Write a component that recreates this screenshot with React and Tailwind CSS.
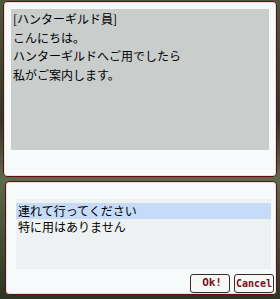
export default function App() {
  const jp = { fontFamily: '"Noto Sans CJK JP", "Noto Sans", sans-serif' };
  const mono = { fontFamily: '"DejaVu Sans Mono", monospace' };
  return (
    <div className="w-[280px] h-[299px] overflow-hidden bg-[linear-gradient(180deg,#4a5a3a_0%,#2e3a24_40%,#5b6a48_60%,#2a3522_100%)] flex flex-col" style={jp}>
      <div className="ml-[3px] mt-[1px] w-[274px] h-[176px] rounded-[4px] border border-[#5a0f18] bg-[#f6fafa] shadow-[inset_0_0_0_1px_#f3dcdc] pt-[7px] pl-[7px]">
        <div className="w-[258px] h-[141px] bg-[#c9cdcc] pl-[2px] pt-[1px] text-[12px] leading-[18.5px] text-black">
          <div>[ハンターギルド員]</div>
          <div>こんにちは。</div>
          <div>ハンターギルドへご用でしたら</div>
          <div>私がご案内します。</div>
        </div>
      </div>
      <div className="ml-[5px] mt-[4px] w-[272px] h-[114px] rounded-[4px] border border-[#5a0f18] bg-[#f6fafa] shadow-[inset_0_0_0_1px_#f3dcdc] flex flex-col">
        <div className="ml-[10px] mt-[17px] w-[255px] h-[70px] bg-[#eef1f2] text-[12px] text-black">
          <div className="mt-[4px] bg-[#c6dbf7] h-[16px] leading-[16px] pl-[2px]">連れて行ってください</div>
          <div className="pl-[2px] h-[16px] leading-[16px]">特に用はありません</div>
        </div>
        <div className="flex justify-end gap-[4px] mt-[5px] mr-[2px]">
          <div className="w-[40px] h-[19px] rounded-[3px] border border-[#3a2a2a] bg-[#f8f8f6] flex items-center justify-end pr-[7px] text-[11px] font-bold text-[#7a1020]" style={mono}>Ok!</div>
          <div className="w-[40px] h-[19px] rounded-[3px] border border-[#3a2a2a] bg-[#f8f8f6] flex items-center justify-center text-[10px] font-bold text-[#7a1020]" style={mono}>Cancel</div>
        </div>
      </div>
    </div>
  );
}
